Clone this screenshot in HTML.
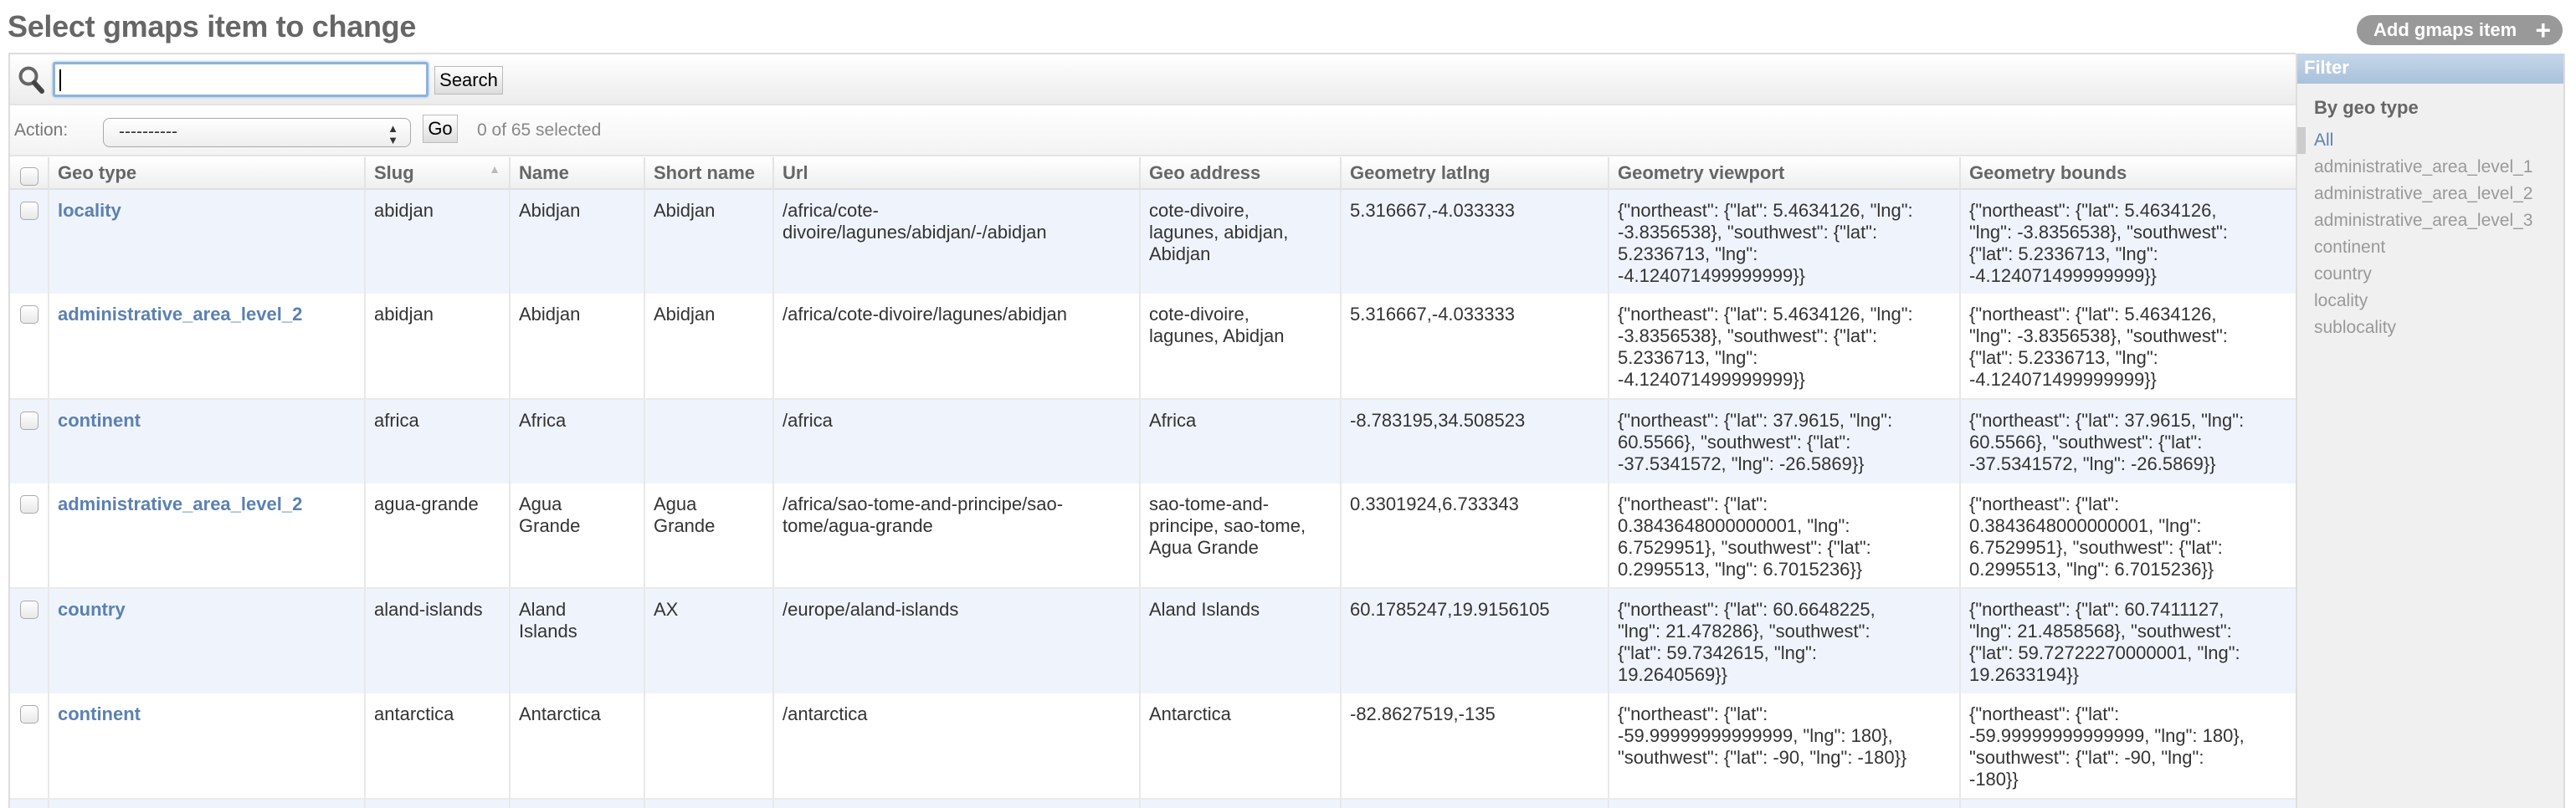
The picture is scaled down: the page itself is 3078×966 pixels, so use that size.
<!DOCTYPE html>
<html style="overflow:hidden;width:3078px;height:966px"><head><meta charset="utf-8"><style>
*{box-sizing:border-box;margin:0;padding:0}
body{width:3078px;height:966px;overflow:hidden;background:#fff;font-family:"Liberation Sans",sans-serif;font-size:22px;color:#333;position:relative}
.title{position:absolute;left:9px;top:10px;font-size:36px;font-weight:bold;color:#666;line-height:44px;letter-spacing:-0.3px}
.add{position:absolute;left:2816px;top:18px;width:246px;height:36px;border-radius:18px;background:#999;color:#fff;font-weight:bold;font-size:22px;line-height:36px;padding-left:20px}
.add span{position:absolute;right:14px;top:0;font-size:32px;font-weight:bold}
.box{position:absolute;left:10px;top:63px;width:2733px;height:903px;border:2px solid #ddd;border-right:none;border-bottom:none;overflow:hidden}
.search{position:absolute;left:0;top:0;width:2731px;height:61px;background:linear-gradient(#fff,#ececec);border-bottom:2px solid #e4e4e4}
.actions{position:absolute;left:0;top:63px;width:2731px;height:59px;background:linear-gradient(#fff,#f3f3f3);border-bottom:2px solid #e4e4e4}
.inp{position:absolute;left:51px;top:9px;width:449px;height:42px;border:3px solid #8db3dc;border-radius:3px;background:#fff;box-shadow:0 0 3px #9bc}
.inp:after{content:"";position:absolute;left:5px;top:6px;width:2px;height:26px;background:#000}
.btn{position:absolute;background:linear-gradient(#fff,#ddd);border:1px solid #bbb;color:#000;font-size:22px;text-align:center}
table{position:absolute;left:0;top:123px;border-collapse:collapse;table-layout:fixed;width:2731px}
th{height:38px;background:linear-gradient(#fff,#efefef);color:#666;text-align:left;font-weight:bold;font-size:22px;padding:0 10px;border-left:2px solid #e4e4e4;border-bottom:2px solid #e0e0e0;white-space:nowrap}
td{vertical-align:top;padding:12px 10px 0 10px;line-height:26px;border-left:2px solid #e8e8e8;white-space:nowrap;overflow:hidden}
th:first-child,td:first-child{border-left:none;padding:0}
tr.a td{background:#eff4fc}
tr.r td{border-bottom:2px solid #eaeaea}
.cb{display:block;width:22px;height:22px;border:1.5px solid #aaa;border-radius:5px;background:linear-gradient(#fff,#e8e8e8);margin:14px 0 0 12px}
th .cb{margin:9px 0 0 12px}
a{color:#5b80b2;font-weight:bold;text-decoration:none}
.filter{position:absolute;left:2743px;top:64px;width:322px;height:910px;background:#f0f0f0;border:2px solid #ddd;border-top:none}
.fh{height:36px;background:linear-gradient(#c6d6e8,#a9c1dc);color:#fff;font-weight:bold;font-size:22px;line-height:34px;padding-left:8px}
.fl{position:absolute;left:20px;font-size:21px;color:#999;line-height:32px}
</style></head><body>
<div class="title">Select gmaps item to change</div>
<div class="add">Add gmaps item<span>+</span></div>
<div class="box">
 <div class="search">
  <svg style="position:absolute;left:9px;top:13px" width="34" height="36" viewBox="0 0 34 36"><circle cx="13" cy="13" r="9.5" fill="none" stroke="#666" stroke-width="4"/><path d="M20 21 L29 31" stroke="#444" stroke-width="6" stroke-linecap="round"/></svg>
  <div class="inp"></div>
  <div class="btn" style="left:507px;top:14px;width:82px;height:34px;line-height:32px">Search</div>
 </div>
 <div class="actions">
  <div style="position:absolute;left:5px;top:16px;color:#777;font-size:21px">Action:</div>
  <div style="position:absolute;left:111px;top:13px;width:368px;height:35px;border:1.5px solid #aaa;border-radius:8px;background:linear-gradient(#fff,#eee);font-size:21px;line-height:32px;padding-left:18px">----------<span style="position:absolute;right:14px;font-size:13px;line-height:14px;top:5px">▲<br>▼</span></div>
  <div class="btn" style="left:493px;top:9px;width:42px;height:34px;line-height:32px">Go</div>
  <div style="position:absolute;left:558px;top:16px;color:#888;font-size:21px">0 of 65 selected</div>
 </div>
 <table>
  <colgroup><col style="width:46px"><col style="width:378px"><col style="width:173px"><col style="width:161px"><col style="width:154px"><col style="width:438px"><col style="width:240px"><col style="width:320px"><col style="width:420px"><col style="width:401px"></colgroup>
  <tr><th><span class="cb"></span></th><th>Geo type</th><th>Slug<span style="float:right;color:#bbb;font-size:14px">▲</span></th><th>Name</th><th>Short name</th><th>Url</th><th>Geo address</th><th>Geometry latlng</th><th>Geometry viewport</th><th>Geometry bounds</th></tr>
  <tr class="a" style="height:125px"><td><span class="cb"></span></td><td><a>locality</a></td><td>abidjan</td><td>Abidjan</td><td>Abidjan</td><td>/africa/cote-<br>divoire/lagunes/abidjan/-/abidjan</td><td>cote-divoire,<br>lagunes, abidjan,<br>Abidjan</td><td>5.316667,-4.033333</td><td>{"northeast": {"lat": 5.4634126, "lng":<br>-3.8356538}, "southwest": {"lat":<br>5.2336713, "lng":<br>-4.124071499999999}}</td><td>{"northeast": {"lat": 5.4634126,<br>"lng": -3.8356538}, "southwest":<br>{"lat": 5.2336713, "lng":<br>-4.124071499999999}}</td></tr>
  <tr class="r" style="height:126px"><td><span class="cb"></span></td><td><a>administrative_area_level_2</a></td><td>abidjan</td><td>Abidjan</td><td>Abidjan</td><td>/africa/cote-divoire/lagunes/abidjan</td><td>cote-divoire,<br>lagunes, Abidjan</td><td>5.316667,-4.033333</td><td>{"northeast": {"lat": 5.4634126, "lng":<br>-3.8356538}, "southwest": {"lat":<br>5.2336713, "lng":<br>-4.124071499999999}}</td><td>{"northeast": {"lat": 5.4634126,<br>"lng": -3.8356538}, "southwest":<br>{"lat": 5.2336713, "lng":<br>-4.124071499999999}}</td></tr>
  <tr class="a" style="height:101px"><td><span class="cb"></span></td><td><a>continent</a></td><td>africa</td><td>Africa</td><td></td><td>/africa</td><td>Africa</td><td>-8.783195,34.508523</td><td>{"northeast": {"lat": 37.9615, "lng":<br>60.5566}, "southwest": {"lat":<br>-37.5341572, "lng": -26.5869}}</td><td>{"northeast": {"lat": 37.9615, "lng":<br>60.5566}, "southwest": {"lat":<br>-37.5341572, "lng": -26.5869}}</td></tr>
  <tr class="r" style="height:125px"><td><span class="cb"></span></td><td><a>administrative_area_level_2</a></td><td>agua-grande</td><td>Agua<br>Grande</td><td>Agua<br>Grande</td><td>/africa/sao-tome-and-principe/sao-<br>tome/agua-grande</td><td>sao-tome-and-<br>principe, sao-tome,<br>Agua Grande</td><td>0.3301924,6.733343</td><td>{"northeast": {"lat":<br>0.3843648000000001, "lng":<br>6.7529951}, "southwest": {"lat":<br>0.2995513, "lng": 6.7015236}}</td><td>{"northeast": {"lat":<br>0.3843648000000001, "lng":<br>6.7529951}, "southwest": {"lat":<br>0.2995513, "lng": 6.7015236}}</td></tr>
  <tr class="a" style="height:126px"><td><span class="cb"></span></td><td><a>country</a></td><td>aland-islands</td><td>Aland<br>Islands</td><td>AX</td><td>/europe/aland-islands</td><td>Aland Islands</td><td>60.1785247,19.9156105</td><td>{"northeast": {"lat": 60.6648225,<br>"lng": 21.478286}, "southwest":<br>{"lat": 59.7342615, "lng":<br>19.2640569}}</td><td>{"northeast": {"lat": 60.7411127,<br>"lng": 21.4858568}, "southwest":<br>{"lat": 59.72722270000001, "lng":<br>19.2633194}}</td></tr>
  <tr class="r" style="height:126px"><td><span class="cb"></span></td><td><a>continent</a></td><td>antarctica</td><td>Antarctica</td><td></td><td>/antarctica</td><td>Antarctica</td><td>-82.8627519,-135</td><td>{"northeast": {"lat":<br>-59.99999999999999, "lng": 180},<br>"southwest": {"lat": -90, "lng": -180}}</td><td>{"northeast": {"lat":<br>-59.99999999999999, "lng": 180},<br>"southwest": {"lat": -90, "lng":<br>-180}}</td></tr>
  <tr class="a" style="height:40px"><td></td><td></td><td></td><td></td><td></td><td></td><td></td><td></td><td></td><td></td></tr>
 </table>
</div>
<div class="filter">
 <div class="fh">Filter</div>
 <div style="position:absolute;left:20px;top:52px;font-weight:bold;color:#666;font-size:22px">By geo type</div>
 <div style="position:absolute;left:0;top:88px;width:10px;height:32px;background:#ccc"></div>
 <div class="fl" style="top:88px;color:#5b80b2">All</div>
 <div class="fl" style="top:120px">administrative_area_level_1</div>
 <div class="fl" style="top:152px">administrative_area_level_2</div>
 <div class="fl" style="top:184px">administrative_area_level_3</div>
 <div class="fl" style="top:216px">continent</div>
 <div class="fl" style="top:248px">country</div>
 <div class="fl" style="top:280px">locality</div>
 <div class="fl" style="top:312px">sublocality</div>
</div>
</body></html>
